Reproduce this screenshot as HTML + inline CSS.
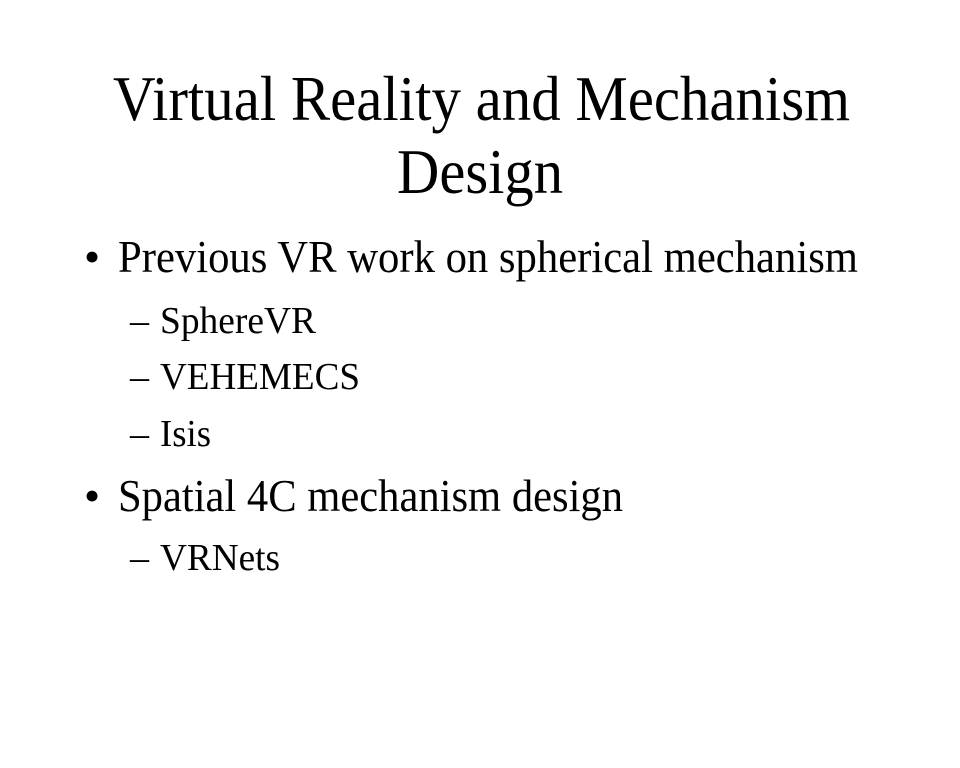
<!DOCTYPE html>
<html><head><meta charset="utf-8"><style>
html,body{margin:0;padding:0;background:#fff;}
svg{display:block;}
text{font-family:"Liberation Serif",serif;fill:#000;}
</style></head><body>
<svg width="960" height="768" viewBox="0 0 960 768" xmlns="http://www.w3.org/2000/svg">
<text x="113" y="120" font-size="64" textLength="737" lengthAdjust="spacingAndGlyphs">Virtual Reality and Mechanism</text>
<text x="397" y="193" font-size="64" textLength="166" lengthAdjust="spacingAndGlyphs">Design</text>
<text x="84" y="272" font-size="46">•</text>
<text x="118" y="272" font-size="46" textLength="740" lengthAdjust="spacingAndGlyphs">Previous VR work on spherical mechanism</text>
<text x="130" y="333" font-size="38">–</text>
<text x="160" y="333" font-size="38" textLength="156" lengthAdjust="spacingAndGlyphs">SphereVR</text>
<text x="130" y="389" font-size="38">–</text>
<text x="160" y="389" font-size="38" textLength="200" lengthAdjust="spacingAndGlyphs">VEHEMECS</text>
<text x="130" y="446" font-size="38">–</text>
<text x="160" y="446" font-size="38" textLength="51" lengthAdjust="spacingAndGlyphs">Isis</text>
<text x="84" y="511" font-size="46">•</text>
<text x="118" y="511" font-size="46" textLength="505" lengthAdjust="spacingAndGlyphs">Spatial 4C mechanism design</text>
<text x="130" y="570" font-size="38">–</text>
<text x="160" y="570" font-size="38" textLength="120" lengthAdjust="spacingAndGlyphs">VRNets</text>
</svg>
</body></html>
